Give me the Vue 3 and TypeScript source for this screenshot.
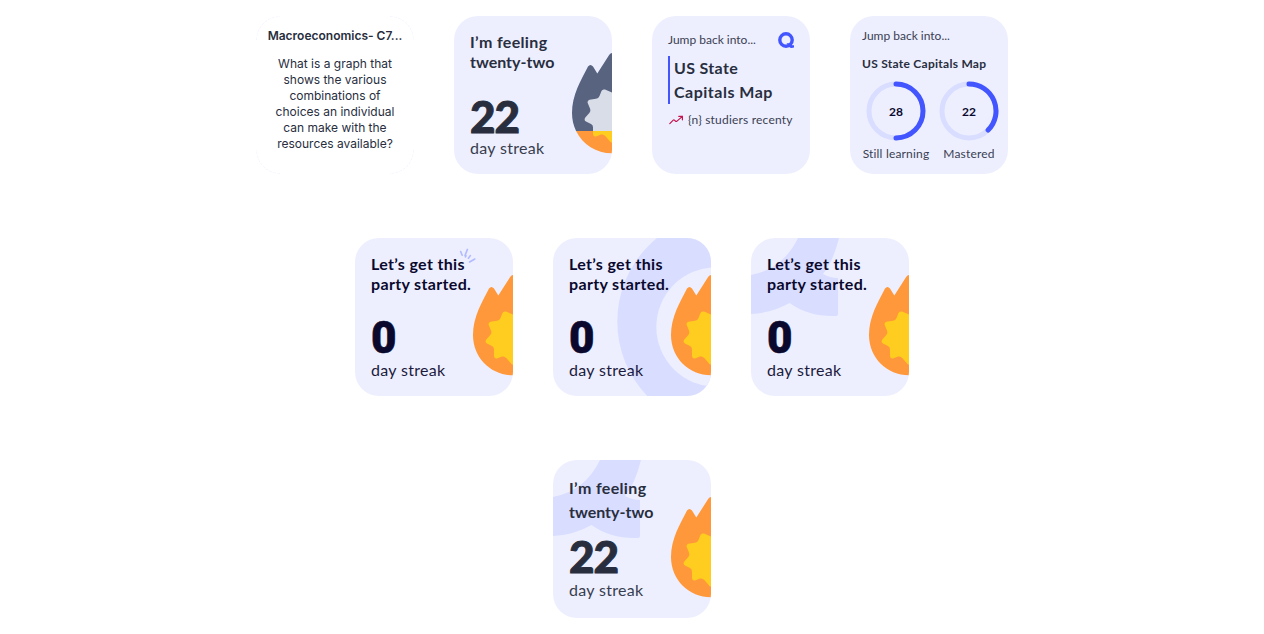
<template>
  <div class="widgets">
    <div class="widgets__row">
      <section class="card card--white">
        <svg class="card__art" viewBox="0 0 158 158" fill="none" stroke="#f3f4ff" stroke-width="1" stroke-dasharray="3 1">
          <path d="M.5 24A23.5 23.5 0 0 1 24 .5M134 .5A23.5 23.5 0 0 1 157.5 24M157.5 134A23.5 23.5 0 0 1 134 157.5M24 157.5A23.5 23.5 0 0 1 .5 134" />
        </svg>
        <h3 class="term__title">Macroeconomics- C7...</h3>
        <p class="term__text">
          <span v-for="line in definition" :key="line">{{ line }}</span>
        </p>
      </section>

      <section class="card streak streak--soft">
        <svg class="card__art" viewBox="0 0 158 158">
          <clipPath id="cold"><rect x="100" y="0" width="58" height="115" /></clipPath>
          <clipPath id="lit"><rect x="100" y="115" width="58" height="43" /></clipPath>
          <g clip-path="url(#cold)">
            <path :d="flame" fill="#586380" />
            <path :d="core" fill="#d9dde8" />
          </g>
          <g clip-path="url(#lit)">
            <path :d="flame" fill="#ff983a" />
            <path :d="core" fill="#ffcd1f" />
          </g>
        </svg>
        <h3 class="streak__title">
          <span class="wide">I’m feeling</span>
          <span>twenty-two</span>
        </h3>
        <strong class="streak__count">22</strong>
        <span class="streak__label">day streak</span>
      </section>

      <section class="card jump">
        <header class="jump__header">
          <span class="jump__label">Jump back into...</span>
          <svg width="16" height="16" viewBox="0 0 16 16">
            <circle cx="8" cy="8" r="6.2" fill="none" stroke="#4255ff" stroke-width="3.4" />
            <path d="M8.5 11.2h3.6l1.4 1.5q.9.8 2.5.6v2.2q-3.4 1.2-4.9-.8z" fill="#4255ff" />
          </svg>
        </header>
        <h3 class="jump__title">
          <span class="wide">US State</span>
          <span class="wider">Capitals Map</span>
        </h3>
        <div class="jump__footer">
          <svg width="16" height="16" viewBox="0 0 16 16" fill="none" stroke="#c4144d" stroke-width="1.2" stroke-linecap="round" stroke-linejoin="round">
            <path d="M1.8 11.6 5.2 8.1Q5.8 7.6 6.4 8.1L7.6 9.2Q8.3 9.8 9 9.1L14.4 4.4M10.8 4.4H14.4V7.8" />
          </svg>
          <span class="jump__studiers">{n} studiers recenty</span>
        </div>
      </section>

      <section class="card progress">
        <span class="jump__label">Jump back into...</span>
        <h3 class="progress__title">US State Capitals Map</h3>
        <div class="progress__rings">
          <figure v-for="ring in rings" :key="ring.label" class="ring">
            <div class="ring__dial">
              <svg width="60" height="60" viewBox="0 0 60 60" fill="none" stroke-width="5">
                <circle cx="30" cy="30" r="27" stroke="#d9ddff" />
                <path :d="ring.arc" stroke="#4255ff" stroke-linecap="round" />
              </svg>
              <b class="ring__value">{{ ring.value }}</b>
            </div>
            <figcaption class="ring__label">{{ ring.label }}</figcaption>
          </figure>
        </div>
      </section>
    </div>

    <div class="widgets__row">
      <section v-for="bg in starters" :key="bg" class="card streak">
        <svg class="card__art" viewBox="0 0 158 158">
          <g v-if="bg === 'spark'" stroke="#b3bbff" stroke-width="1.6" stroke-linecap="round">
            <path d="M105.7 13.6 107.2 17.2M110 17.6 112.4 11.4M110.4 19 111 17.8M113.4 20.2 115.4 17.6M114.6 24 119.8 21" />
          </g>
          <template v-else-if="bg === 'ring'">
            <circle cx="171.8" cy="83.5" r="107.5" fill="#d9ddff" />
            <circle cx="163" cy="89" r="59.7" fill="#edefff" />
          </template>
          <path v-else :d="star" fill="#d9ddff" />
          <path :d="flame" fill="#ff983a" />
          <path :d="core" fill="#ffcd1f" />
        </svg>
        <h3 class="streak__title wide">
          <span>Let’s get this</span>
          <span>party started.</span>
        </h3>
        <strong class="streak__count streak__count--zero">0</strong>
        <span class="streak__label">day streak</span>
      </section>
    </div>

    <div class="widgets__row">
      <section class="card streak streak--soft streak--loose">
        <svg class="card__art" viewBox="0 0 158 158">
          <path :d="star" fill="#d9ddff" />
          <path :d="flame" fill="#ff983a" />
          <path :d="core" fill="#ffcd1f" />
        </svg>
        <h3 class="streak__title">
          <span class="wide">I’m feeling</span>
          <span>twenty-two</span>
        </h3>
        <strong class="streak__count">22</strong>
        <span class="streak__label">day streak</span>
      </section>
    </div>
  </div>
</template>

<script setup lang="ts">
interface Ring {
  label: string
  value: number
  arc: string
}

const definition: string[] = [
  'What is a graph that',
  'shows the various',
  'combinations of',
  'choices an individual',
  'can make with the',
  'resources available?'
]

const rings: Ring[] = [
  { label: 'Still learning', value: 28, arc: 'M30 3A27 27 0 0 1 30 57' },
  { label: 'Mastered', value: 22, arc: 'M30 3A27 27 0 0 1 49.1 49.1' }
]

const starters = ['spark', 'ring', 'star']

const flame =
  'M158 37Q156.4 37 155.3 38.8L143.3 57.5 139 50.5Q136.4 47.3 134 50.5C127 64 118 79 118 97C118 120 136 137.3 158 137.3Z'
const core =
  'M158 76.5 151 73.6Q148.5 72.8 147.5 75L145.5 80Q144.5 82.5 142 82.7L135.5 83.7Q133 84.5 133.7 87L136 92.5Q137 95 135.3 97L131.3 101.5Q129.6 104 132 105.5L137 108Q139.3 109.2 139 112L139 118Q139.3 121 142 120.5L147 118.6Q149.5 118 151.3 120L156.5 126 158 126.8Z'
const star = 'M0 37Q32 31 47 0H88Q82 24 72 36Q79 40 87 40V76Q87 78 85 78Q58 79 38.5 65Q21 75 0 76Z'
</script>

<style>
body {
  background: #fff;
}
</style>

<style scoped>
.widgets {
  display: flex;
  flex-direction: column;
  gap: 64px;
  padding: 16px 0;
  font-family: Lato, "Open Sans", sans-serif;
  color: #282e3e;
}

.widgets__row {
  display: flex;
  justify-content: center;
  gap: 40px;
}

.card {
  position: relative;
  box-sizing: border-box;
  width: 158px;
  height: 158px;
  border-radius: 24px;
  background: #edefff;
  overflow: hidden;
  display: flex;
  flex-direction: column;
  white-space: nowrap;
}

.card--white {
  background: #fff;
  align-items: center;
}

.card__art {
  position: absolute;
  inset: 0;
}

h3,
p,
figure {
  margin: 0;
}

.wide {
  letter-spacing: 0.34px;
}

.wider {
  letter-spacing: 0.5px;
}

.term__title {
  padding-top: 12px;
  font: 600 12px/16px Inter, sans-serif;
}

.term__text {
  padding-top: 12px;
  font: 400 12px/16px Inter, sans-serif;
  text-align: center;
}

.term__text span,
.streak__title span,
.jump__title span {
  display: block;
}

.streak {
  padding: 16px 16px 0;
  color: #0a092d;
}

.streak--soft {
  color: #282e3e;
}

.streak__title,
.streak__count,
.streak__label {
  position: relative;
}

.streak__title {
  font-size: 16px;
  font-weight: 700;
  line-height: 20px;
}

.streak__count {
  margin-top: 23px;
  font-size: 44px;
  font-weight: 900;
  line-height: 42px;
  letter-spacing: -1px;
  -webkit-text-stroke: 1px currentColor;
}

.streak__count--zero {
  font-family: Roboto, sans-serif;
  -webkit-text-stroke-width: 0.6px;
}

.streak__label {
  margin-top: 1px;
  font-size: 16px;
  line-height: 20px;
  letter-spacing: 0.32px;
  opacity: 0.92;
}

.streak--loose .streak__title {
  line-height: 24px;
}

.streak--loose .streak__count {
  margin-top: 11px;
}

.streak--loose .streak__label {
  margin-top: 3px;
}

.jump {
  padding: 16px;
}

.jump__header {
  display: flex;
  justify-content: space-between;
  height: 18px;
}

.jump__label,
.jump__footer,
.ring__label {
  font-size: 12px;
  line-height: 16px;
  color: #3a4052;
}

.jump__title {
  margin-top: 6px;
  padding-left: 4px;
  border-left: 2px solid #4255ff;
  font-size: 16px;
  font-weight: 700;
  line-height: 24px;
}

.jump__footer {
  display: flex;
  align-items: center;
  gap: 4px;
  margin-top: 8px;
}

.jump__studiers {
  letter-spacing: 0.2px;
}

.progress {
  padding: 12px;
}

.progress__title {
  margin-top: 12px;
  font-size: 12px;
  line-height: 16px;
  letter-spacing: 0.27px;
}

.progress__rings {
  display: flex;
  gap: 5px;
  margin-top: 9px;
}

.ring {
  flex: none;
  width: 68px;
  text-align: center;
}

.ring__dial {
  display: grid;
  place-items: center;
}

.ring__dial svg,
.ring__value {
  grid-area: 1 / 1;
}

.ring__value {
  font-size: 12px;
  color: #0a092d;
}

.ring__label {
  margin-top: 5px;
  letter-spacing: 0.18px;
}
</style>
